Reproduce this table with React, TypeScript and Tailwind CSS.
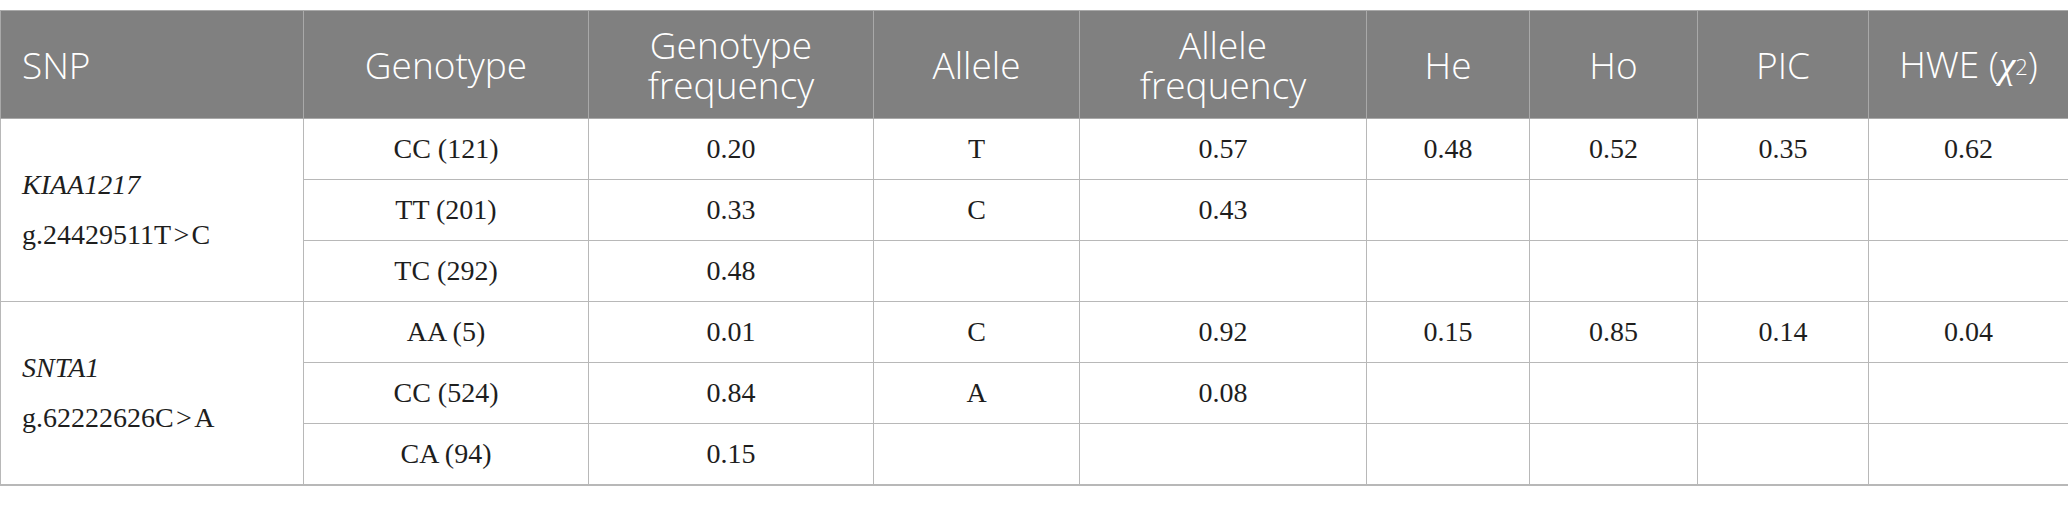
import React from "react";

const cols = [303, 285, 285, 206, 287, 163, 168, 171, 200];

type Row = string[];

const group1: Row[] = [
  ["CC (121)", "0.20", "T", "0.57", "0.48", "0.52", "0.35", "0.62"],
  ["TT (201)", "0.33", "C", "0.43", "", "", "", ""],
  ["TC (292)", "0.48", "", "", "", "", "", ""],
];
const group2: Row[] = [
  ["AA (5)", "0.01", "C", "0.92", "0.15", "0.85", "0.14", "0.04"],
  ["CC (524)", "0.84", "A", "0.08", "", "", "", ""],
  ["CA (94)", "0.15", "", "", "", "", "", ""],
];

const th =
  "border border-[#a9a9a9] text-white font-['Open_Sans',sans-serif] font-light text-[37px] leading-[40px] text-center align-middle px-2";
const td =
  "border border-[#b8b8b8] text-[#1e1e1e] font-['Liberation_Serif',serif] text-[28px] text-center align-middle h-[61px]";

function Group({ gene, variant, rows }: { gene: string; variant: string; rows: Row[] }) {
  return (
    <>
      {rows.map((r, i) => (
        <tr key={i}>
          {i === 0 && (
            <td
              rowSpan={3}
              className="border border-[#b8b8b8] text-[#1e1e1e] font-['Liberation_Serif',serif] text-[28px] leading-[50px] text-left align-middle pl-[21px]"
            >
              <div className="italic">{gene}</div>
              <div>{variant}</div>
            </td>
          )}
          {r.map((c, j) => (
            <td key={j} className={td}>
              {c}
            </td>
          ))}
        </tr>
      ))}
    </>
  );
}

export default function App() {
  return (
    <div className="w-[2068px] h-[505px] bg-white pt-[10px]">
      <table className="w-[2068px] table-fixed border-collapse border-b-2 border-b-[#b8b8b8]">
        <colgroup>
          {cols.map((w, i) => (
            <col key={i} style={{ width: w }} />
          ))}
        </colgroup>
        <thead>
          <tr className="bg-[#808080] h-[108px]">
            <th className={th + " !text-left pl-[21px]"}>SNP</th>
            <th className={th}>Genotype</th>
            <th className={th}>
              Genotype
              <br />
              frequency
            </th>
            <th className={th}>Allele</th>
            <th className={th}>
              Allele
              <br />
              frequency
            </th>
            <th className={th}>He</th>
            <th className={th}>Ho</th>
            <th className={th}>PIC</th>
            <th className={th}>
              HWE (
              <span className="font-['Liberation_Serif',serif] italic">χ</span>
              <sup className="text-[22px] relative -top-[3px]">2</sup>)
            </th>
          </tr>
        </thead>
        <tbody>
          <Group gene="KIAA1217" variant={"g.24429511T\u200A>\u200AC"} rows={group1} />
          <Group gene="SNTA1" variant={"g.62222626C\u200A>\u200AA"} rows={group2} />
        </tbody>
      </table>
    </div>
  );
}
